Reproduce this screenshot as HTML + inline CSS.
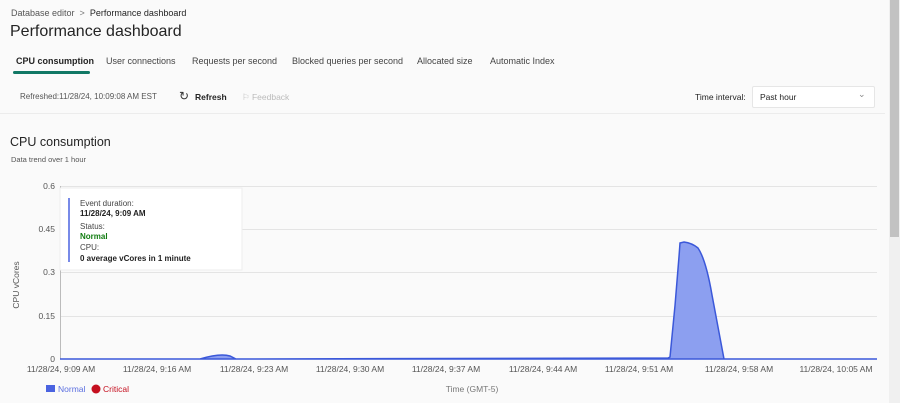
<!DOCTYPE html>
<html><head><style>
body{margin:0;width:900px;height:403px;overflow:hidden;background:#fafafa;font-family:"Liberation Sans",sans-serif;color:#242424;position:relative}
.a{position:absolute;white-space:nowrap}
.t{font-size:9px;color:#444;top:56px}
</style></head><body>
<div class="a" style="left:11px;top:8px;font-size:9px;color:#555">Database editor &nbsp;<span style="color:#777">&gt;</span>&nbsp; <span style="color:#242424">Performance dashboard</span></div>
<div class="a" style="left:10px;top:23px;font-size:16px">Performance dashboard</div>
<div class="a t" style="left:16px;font-weight:bold;color:#242424">CPU consumption</div>
<div class="a" style="left:13px;top:71px;width:77px;height:3px;background:#117865;border-radius:2px"></div>
<div class="a t" style="left:106px">User connections</div>
<div class="a t" style="left:192px">Requests per second</div>
<div class="a t" style="left:292px">Blocked queries per second</div>
<div class="a t" style="left:417px">Allocated size</div>
<div class="a t" style="left:490px">Automatic Index</div>
<div class="a" style="left:20px;top:92px;font-size:8px;color:#555">Refreshed:11/28/24, 10:09:08 AM EST</div>
<div class="a" style="left:179px;top:89px;font-size:12px;color:#333">&#x21BB;</div>
<div class="a" style="left:195px;top:92px;font-size:8.5px;font-weight:bold">Refresh</div>
<div class="a" style="left:242px;top:92px;font-size:8.5px;color:#bbb">&#x2690; Feedback</div>
<div class="a" style="left:695px;top:92px;font-size:8.5px">Time interval:</div>
<div class="a" style="left:752px;top:86px;width:121px;height:20px;background:#fff;border:1px solid #e6e6e6;border-radius:2px"></div>
<div class="a" style="left:760px;top:92px;font-size:8.5px">Past hour</div>
<div class="a" style="left:858px;top:89px;font-size:9px;color:#888">&#x2304;</div>
<div class="a" style="left:0;top:113px;width:885px;height:1px;background:#ececec"></div>
<div class="a" style="left:10px;top:135px;font-size:12.5px">CPU consumption</div>
<div class="a" style="left:11px;top:155px;font-size:7.5px;color:#555">Data trend over 1 hour</div>
<div class="a" style="left:889px;top:0;width:11px;height:403px;background:#f0f0f0"></div>
<div class="a" style="left:890px;top:0;width:9px;height:237px;background:#c2c2c2"></div>
<svg class="a" style="left:0;top:0" width="888" height="403" font-family="Liberation Sans,sans-serif" font-size="8.5" fill="#555">
<g stroke="#e4e4e4" stroke-width="1">
<line x1="60" y1="186.5" x2="877" y2="186.5"/><line x1="60" y1="229.5" x2="877" y2="229.5"/>
<line x1="60" y1="272.5" x2="877" y2="272.5"/><line x1="60" y1="316.5" x2="877" y2="316.5"/></g>
<line x1="60.5" y1="186" x2="60.5" y2="359" stroke="#bbb"/>
<g text-anchor="end"><text x="55" y="189">0.6</text><text x="55" y="232">0.45</text><text x="55" y="275">0.3</text><text x="55" y="319">0.15</text><text x="55" y="362">0</text></g>
<text transform="translate(19,285) rotate(-90)" text-anchor="middle">CPU vCores</text>
<path d="M60 359 L200 359 Q220 353 230 356 L236 359 L668 358 L670 357 Q676 300 680 243 L684 242 Q692 243 698 248 Q706 260 712 295 L724 359 L877 359 Z" fill="#8c9ff0" stroke="#3b58d9" stroke-width="1.5"/>
<g text-anchor="middle"><text x="61" y="372">11/28/24, 9:09 AM</text><text x="157" y="372">11/28/24, 9:16 AM</text><text x="254" y="372">11/28/24, 9:23 AM</text><text x="350" y="372">11/28/24, 9:30 AM</text><text x="446" y="372">11/28/24, 9:37 AM</text><text x="543" y="372">11/28/24, 9:44 AM</text><text x="639" y="372">11/28/24, 9:51 AM</text><text x="739" y="372">11/28/24, 9:58 AM</text><text x="836" y="372">11/28/24, 10:05 AM</text>
<text x="472" y="392" fill="#777">Time (GMT-5)</text></g>
<rect x="46" y="385" width="9" height="7" fill="#4a63e0"/><text x="58" y="392" fill="#5b6fe0">Normal</text>
<circle cx="96" cy="389" r="4.5" fill="#c50f1f"/><text x="103" y="392" fill="#c50f1f">Critical</text>
<rect x="60" y="188" width="182" height="82" fill="#fff" stroke="#eee"/>
<line x1="69" y1="198" x2="69" y2="262" stroke="#4a63e0" stroke-width="1.5"/>
<g font-size="8"><text x="80" y="206" fill="#444">Event duration:</text><text x="80" y="216" fill="#222" font-weight="bold">11/28/24, 9:09 AM</text>
<text x="80" y="229" fill="#444">Status:</text><text x="80" y="239" fill="#107c10" font-weight="bold">Normal</text>
<text x="80" y="250" fill="#444">CPU:</text><text x="80" y="261" fill="#222" font-weight="bold">0 average vCores in 1 minute</text></g>
</svg>
</body></html>
